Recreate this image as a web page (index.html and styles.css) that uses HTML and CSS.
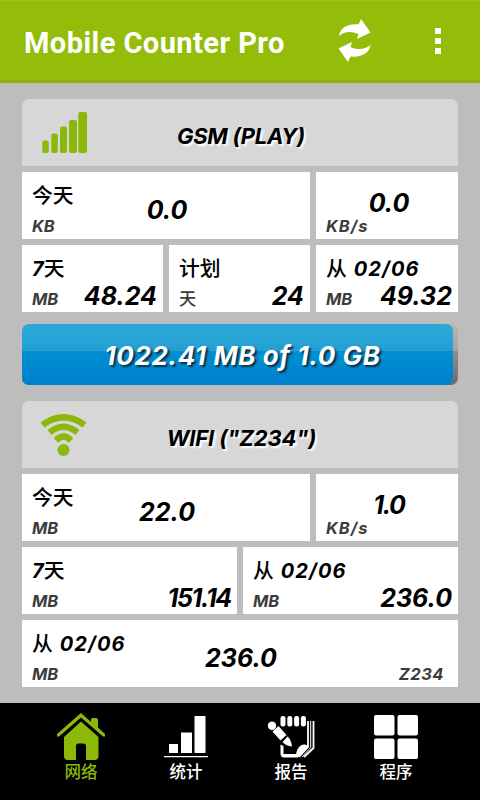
FILE: index.html
```
<!DOCTYPE html>
<html lang="zh">
<head>
    <meta charset="UTF-8">
    <meta name="viewport" content="width=device-width, initial-scale=1.0">
    <title>Mobile Counter Pro</title>
    <link rel="stylesheet" href="styles.css">
</head>
<body>
    <header class="topbar">
        <h1 class="title">Mobile Counter Pro</h1>
        <svg class="refresh" width="34" height="44" viewBox="0 0 34 44">
            <path d="M1 17C2 9 10 4.500 20.500 5.500L23 0L32.500 13.500L19 20L20.500 15C13 11.500 6 12.500 1 17Z"/>
            <path d="M32.500 26C31.500 34 24 38.500 12.500 37.500L10 43L.5 29.500L14 23L12.500 28C20 31.500 27 30.500 32.500 26Z"/>
        </svg>
        <svg class="more" width="6" height="26" viewBox="0 0 6 26">
            <path d="M0 0h6v6H0zM0 10h6v6H0zM0 20h6v6H0z"/>
        </svg>
    </header>

    <main class="content">
        <section class="panel">
            <div class="panel-head">
                <svg class="panel-icon" width="48" height="44" viewBox="0 0 48 44">
                    <rect x="2.300" y="29.500" width="6.500" height="12.500" rx="2"/>
                    <rect x="11.300" y="22.500" width="6.500" height="19.500" rx="2"/>
                    <rect x="20" y="15.500" width="7" height="26.500" rx="2"/>
                    <rect x="29" y="9" width="8" height="33" rx="2"/>
                    <rect x="38.300" y="1" width="8.700" height="41" rx="2"/>
                </svg>
                <h2 class="panel-title gsm">GSM (PLAY)</h2>
            </div>
            <div class="row wide-narrow">
                <div class="cell">
                    <span class="name"><span class="cjk">今天</span></span>
                    <span class="unit">KB</span>
                    <span class="value middle">0.0</span>
                </div>
                <div class="cell">
                    <span class="unit rate">KB/s</span>
                    <span class="value speed">0.0</span>
                </div>
            </div>
            <div class="row thirds">
                <div class="cell">
                    <span class="name">7<span class="cjk">天</span></span>
                    <span class="unit">MB</span>
                    <span class="value">48.24</span>
                </div>
                <div class="cell">
                    <span class="name"><span class="cjk">计划</span></span>
                    <span class="unit"><span class="cjk">天</span></span>
                    <span class="value">24</span>
                </div>
                <div class="cell">
                    <span class="name date"><span class="cjk">从</span> 02/06</span>
                    <span class="unit">MB</span>
                    <span class="value">49.32</span>
                </div>
            </div>
        </section>

        <div class="usage">
            <div class="usage-fill">
                <span class="usage-text">1022.41 MB of 1.0 GB</span>
            </div>
        </div>

        <section class="panel">
            <div class="panel-head">
                <svg class="panel-icon" width="48" height="44" viewBox="0 0 48 44">
                    <circle cx="23.500" cy="37" r="6"/>
                    <path class="arc" d="M2.500 12Q23.500 -3.500 44.500 12"/>
                    <path class="arc" d="M9.500 19.500Q23.500 8 37.500 19.500"/>
                    <path class="arc" d="M16 27.500Q23.500 19.500 31 27.500"/>
                </svg>
                <h2 class="panel-title wifi">WIFI ("Z234")</h2>
            </div>
            <div class="row wide-narrow">
                <div class="cell">
                    <span class="name"><span class="cjk">今天</span></span>
                    <span class="unit">MB</span>
                    <span class="value middle">22.0</span>
                </div>
                <div class="cell">
                    <span class="unit rate">KB/s</span>
                    <span class="value speed tight">1.0</span>
                </div>
            </div>
            <div class="row halves">
                <div class="cell">
                    <span class="name">7<span class="cjk">天</span></span>
                    <span class="unit">MB</span>
                    <span class="value tight">151.14</span>
                </div>
                <div class="cell">
                    <span class="name date"><span class="cjk">从</span> 02/06</span>
                    <span class="unit">MB</span>
                    <span class="value">236.0</span>
                </div>
            </div>
            <div class="row">
                <div class="cell">
                    <span class="name date"><span class="cjk">从</span> 02/06</span>
                    <span class="unit">MB</span>
                    <span class="value middle">236.0</span>
                    <span class="unit network">Z234</span>
                </div>
            </div>
        </section>
    </main>

    <nav class="tabs">
        <a class="tab active">
            <svg width="48" height="48" viewBox="0 0 48 48">
                <path d="M24 0L34 9V6.500Q34 5 35.500 5H39Q41 5 41 7V14.500L48 21V23.500H46L24 4.500L2 23.500H0V21Z"/>
                <path d="M24 8.500L41.500 24V43Q41.500 47 37.500 47H29V33Q29 30.500 26.500 30.500H21.500Q19 30.500 19 33V47H11Q7 47 7 43V24Z"/>
            </svg>
            网络
        </a>
        <a class="tab">
            <svg width="48" height="48" viewBox="0 0 48 48">
                <path d="M7 31h9v9H7zM19 19.500h11V40H19zM32.500 3H43.500V40H32.500zM2 43h44v1.300H2z"/>
            </svg>
            统计
        </a>
        <a class="tab">
            <svg width="48" height="48" viewBox="0 0 48 48">
                <rect x="13.500" y="3" width="5" height="10.500" rx="2.200"/>
                <rect x="20.300" y="3" width="5" height="10.500" rx="2.200"/>
                <rect x="27.100" y="3" width="5" height="10.500" rx="2.200"/>
                <rect x="33.900" y="3" width="5" height="10.500" rx="2.200"/>
                <circle cx="5" cy="12.800" r="4.200"/>
                <path d="M5.500 18.500L11.500 13L19.500 22L13.500 27.500ZM15.500 29L20.500 23.500Q24 26 25 33.500Q19 33 15.500 29Z"/>
                <path d="M13.500 31.500L16.500 33V41H29Q31 31 38 31.500L41.500 33L31 44.500H17Q13.500 44.500 13.500 40Z"/>
                <path class="sheets" d="M41 8V34L32 44M46.500 8V35L37 44"/>
                <path class="sheets thin" d="M43.700 8V34.500L35 44"/>
            </svg>
            报告
        </a>
        <a class="tab">
            <svg width="48" height="48" viewBox="0 0 48 48">
                <rect x="2" y="2" width="20.500" height="20.500" rx="2"/>
                <rect x="25.500" y="2" width="20.500" height="20.500" rx="2"/>
                <rect x="2" y="25.500" width="20.500" height="20.500" rx="2"/>
                <rect x="25.500" y="25.500" width="20.500" height="20.500" rx="2"/>
            </svg>
            程序
        </a>
    </nav>
</body>
</html>
```
FILE: styles.css
```
* {
    box-sizing: border-box;
}

body {
    display: flex;
    flex-direction: column;
    height: 800px;
    margin: 0;
    overflow: hidden;
    background-color: #bdbdbd;
    font-family: Inter, "Noto Sans CJK SC", sans-serif;
}

.topbar {
    display: flex;
    align-items: center;
    height: 83px;
    padding: 0 39px 0 24px;
    background-color: #94bd0a;
    border-top: 1px solid #9fc421;
    border-bottom: 3px solid #8bb00a;
    fill: #fff;
}

.title {
    flex: 1;
    margin: 0;
    padding-top: 4px;
    color: #fff;
    font: bold 29px Roboto, sans-serif;
    letter-spacing: 0.45px;
}

.refresh {
    margin-right: 63px;
}

.content {
    display: flex;
    flex-direction: column;
    flex: 1;
    padding: 16px 22px;
}

.panel {
    display: grid;
    gap: 6px;
}

.panel-head {
    display: grid;
    height: 67px;
    background-color: #d7d7d7;
    border-radius: 7px 7px 0 0;
}

.panel-icon {
    grid-area: 1 / 1;
    margin: 12px 0 0 18px;
    overflow: visible;
    fill: #8cb80c;
}

.arc {
    fill: none;
    stroke: #8cb80c;
    stroke-width: 6.5;
}

.panel-title {
    grid-area: 1 / 1;
    place-self: center;
    margin: 7px 0 0;
    color: #000;
    font-size: 22px;
    font-style: italic;
    line-height: 26px;
    text-shadow: 2px 2px 2px #fff;
}

.gsm {
    padding-left: 2px;
    letter-spacing: -0.3px;
}

.wifi {
    padding-left: 3px;
    letter-spacing: -0.15px;
}

.row {
    display: grid;
    gap: 6px;
    height: 67px;
}

.wide-narrow {
    grid-template-columns: 288px 142px;
}

.thirds {
    grid-template-columns: 141px 141px 142px;
}

.halves {
    grid-template-columns: 1fr 1fr;
}

/* everything in a cell shares one grid area */
.cell {
    display: grid;
    grid-template-areas: "all";
    padding: 0 6px 0 10px;
    background-color: #fff;
    color: #000;
    font-style: italic;
    font-weight: bold;
    white-space: nowrap;
}

.name,
.unit,
.value {
    grid-area: all;
}

.name {
    margin-top: 9px;
    font-size: 20px;
    line-height: 26px;
}

.date {
    letter-spacing: 1.1px;
}

.unit {
    align-self: end;
    margin-bottom: 4px;
    color: #3c3c3c;
    font-size: 16.5px;
    line-height: 18px;
}

.rate {
    letter-spacing: 1px;
}

.cjk {
    font-family: "Noto Sans CJK SC", sans-serif;
    font-style: normal;
    font-weight: 500;
    font-size: 1.04em;
}

.value {
    place-self: end;
    margin-bottom: 1px;
    font-size: 25px;
    line-height: 30px;
}

.middle {
    place-self: center;
    margin: 8px 2px 0 0;
}

.speed {
    place-self: center;
    margin: 0 0 6px;
}

.tight {
    letter-spacing: -1.3px;
}

.network {
    justify-self: end;
    margin-right: 8px;
    letter-spacing: 0.5px;
}

.usage {
    height: 61px;
    margin: 12px 0 16px;
    padding-right: 5px;
    border-radius: 7px;
    background: linear-gradient(#b5b5b5, #a5a5a5 44%, #909090 44%, #6b6b6b);
}

.usage-fill {
    display: flex;
    justify-content: center;
    height: 61px;
    padding: 16px 0 0 10px;
    border-radius: 7px;
    background: linear-gradient(#2ba8d8, #259fd2 44%, #0090d0 44%, #0080cd);
}

.usage-text {
    color: #fff;
    font-size: 26px;
    font-style: italic;
    font-weight: bold;
    letter-spacing: 0.6px;
    line-height: 32px;
    text-shadow: 2px 2px 2px #0a3048;
    white-space: nowrap;
}

.tabs {
    display: flex;
    justify-content: center;
    height: 97px;
    padding: 10px 3px 0 0;
    background-color: #000;
    fill: #fff;
}

.tab {
    display: flex;
    flex-direction: column;
    align-items: center;
    width: 105px;
    color: #fff;
    font-family: "Noto Sans CJK SC", sans-serif;
    font-size: 16.5px;
    font-weight: 500;
    line-height: 20px;
}

.active {
    color: #8cb80c;
    fill: #8cb80c;
}

.sheets {
    fill: none;
    stroke: #fff;
    stroke-width: 1.8;
}

.thin {
    stroke-width: 1;
}
```
